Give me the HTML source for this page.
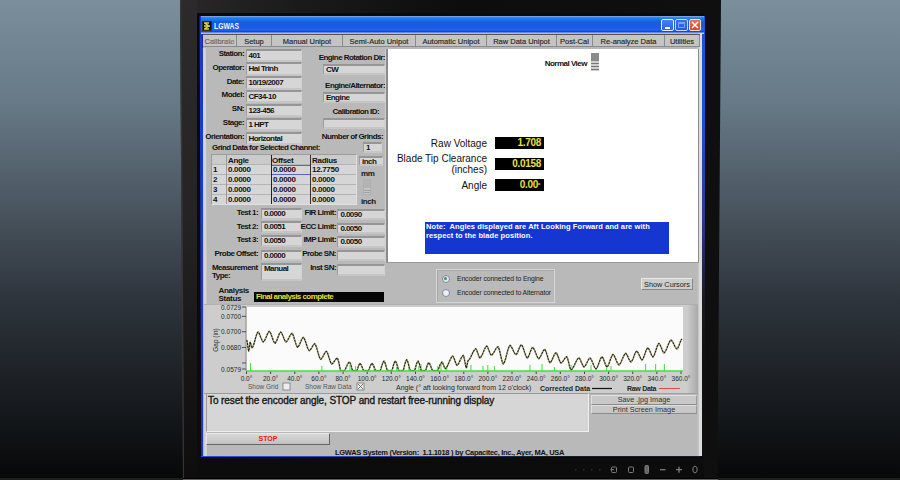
<!DOCTYPE html>
<html><head><meta charset="utf-8">
<style>
*{margin:0;padding:0;box-sizing:border-box}
html,body{width:900px;height:480px;overflow:hidden;background:#000}
body{position:relative;font-family:"Liberation Sans",sans-serif;}
.a{position:absolute}
#bgl{left:0;top:0;width:900px;height:480px;background:linear-gradient(#7a8e9c 0%,#687a88 20.8%,#4c5862 41.7%,#2e343c 62.5%,#181c20 83.3%,#070808 99.5%,#1e1e1e 99.6%)}
#bez{left:0;top:0;width:900px;height:480px;background:linear-gradient(90deg,#2a2828 180px,#1a1a1a 300px,#0d0d0d 460px,#0f0f0f 721px);clip-path:polygon(180px 0,721px 0,717.5px 480px,183px 480px)}
#bezs{left:197px;top:13px;width:507px;height:467px;background:linear-gradient(#0a0a0a,#0c0b0b 60%,#0d0c0c)}
#bezl{left:0;top:0;width:900px;height:480px;background:linear-gradient(#2c2a2a,#262324 45%,#181616 75%,#0e0d0d);clip-path:polygon(181.5px 0,197px 0,197px 480px,184px 480px)}
#bezle{left:0;top:0;width:900px;height:480px;background:#3a3533;clip-path:polygon(180px 0,181.5px 0,184px 480px,183px 480px)}
#bezb{left:183px;top:477.5px;width:535px;height:2.5px;background:linear-gradient(#020202 0,#020202 0.8px,#655d57 1px)}
#win{left:0;top:0;width:900px;height:480px;background:#1a3ad8;clip-path:polygon(199.6px 16px,202.6px 16px,204.2px 457px,201.2px 457px)}
#winhl{left:0;top:0;width:900px;height:480px;background:#d4d4d4;clip-path:polygon(202.9px 48px,205.8px 48px,207px 456px,204.2px 456px)}
#winb{left:201px;top:456px;width:499px;height:1px;background:linear-gradient(90deg,#2050e0,#2a48b0 30%,#181c28 70%)}
#winr{left:702px;top:16px;width:2.5px;height:441px;background:linear-gradient(#2050d8,#2050d8 20%,#2a3a90 45%,#181820 65%,#101010 80%)}
#title{left:201px;top:16px;width:503px;height:18px;background:linear-gradient(#c0b0d0 0,#2a90f8 1px,#1a80f0 2.5px,#1a5ce0 6px,#1a58e0 10px,#2064f0 14px,#0c40d8 16px,#c8d0e8 17px)}
#panel{left:203px;top:33px;width:499px;height:423px;background:#b9b9b9;border-right:3px solid #dcdcdc;box-shadow:inset -1.5px 0 0 #c4c4c4}
.lbl{position:absolute;font-weight:bold;font-size:8px;letter-spacing:-0.55px;color:#111;text-align:right;white-space:nowrap}
.box{position:absolute;box-sizing:border-box;background:#d6d6d6;border-top:2px solid #969696;border-left:1px solid #9c9c9c;border-bottom:2px solid #c6c6c6;border-right:1px solid #d2d2d2;font-size:8px;font-weight:bold;letter-spacing:-0.55px;color:#111;padding-left:2px;white-space:nowrap}
.tb{font-size:8px;font-weight:bold;letter-spacing:-0.3px;color:#111;line-height:9px;white-space:nowrap}
.tab{position:absolute;top:35px;height:12px;background:#c4c4c4;border-right:1px solid #8a8a8a;border-bottom:1px solid #8a8a8a;font-size:7.5px;color:#262626;-webkit-text-stroke:0.15px #262626;text-align:center;line-height:13px;white-space:nowrap}
</style></head><body>
<div id="bgl" class="a"></div>
<div id="bez" class="a"></div>
<div id="bezs" class="a"></div>
<div id="bezl" class="a"></div>
<div id="bezle" class="a"></div>
<div id="bezb" class="a"></div>
<div id="win" class="a"></div>
<div id="winr" class="a"></div>
<div id="winb" class="a"></div>
<div id="title" class="a"></div>
<div id="panel" class="a"></div>
<div id="winhl" class="a"></div>

<!-- title -->
<svg class="a" style="left:202px;top:21px" width="10" height="10" viewBox="0 0 10 10"><rect x="0.5" y="0.5" width="9" height="9" fill="#111" stroke="#3a3010" stroke-width="1"/><path d="M2,2 L7,2 M2,5 L8,5 M2,8 L7,8 M3,2.5 L7,5 L3,7.5" stroke="#e0d050" stroke-width="1.4" fill="none"/></svg>
<div class="a" style="left:214px;top:20px;font-size:8.5px;font-weight:bold;color:#f4f4ff;line-height:13px;transform:scaleX(0.8);transform-origin:0 0">LGWAS</div>
<div class="a" style="left:661px;top:19px;width:13px;height:12px;background:linear-gradient(#4a80f8,#2a5ee8);border:1px solid #e8f0ff;border-radius:2px"><div class="a" style="left:3px;top:7px;width:5px;height:2px;background:#fff"></div></div>
<div class="a" style="left:675px;top:19px;width:13px;height:12px;background:linear-gradient(#3a70f0,#2058e0);border:1px solid #c8d8ff;border-radius:2px"><div class="a" style="left:2px;top:2px;width:7px;height:6px;border:1px solid #7aa0f0;border-top-width:2px"></div></div>
<div class="a" style="left:689px;top:19px;width:12px;height:12px;background:linear-gradient(#f07048,#d84a20);border:1px solid #f8e0d0;border-radius:2px"><svg class="a" style="left:1px;top:1px" width="8" height="8" viewBox="0 0 8 8"><path d="M1,1 L7,7 M7,1 L1,7" stroke="#fff" stroke-width="1.5"/></svg></div>
<!-- tabs -->
<div class="a" style="left:203px;top:34px;width:497px;height:13px;background:#b8b8b8;border-top:1px solid #555"></div>
<div class="tab" style="left:203px;width:34px;color:#888">Calibrate</div>
<div class="tab" style="left:237px;width:35px">Setup</div>
<div class="tab" style="left:272px;width:71px">Manual Unipot</div>
<div class="tab" style="left:343px;width:73px">Semi-Auto Unipot</div>
<div class="tab" style="left:416px;width:71px">Automatic Unipot</div>
<div class="tab" style="left:487px;width:70px">Raw Data Unipot</div>
<div class="tab" style="left:557px;width:36px">Post-Cal</div>
<div class="tab" style="left:593px;width:72px">Re-analyze Data</div>
<div class="tab" style="left:665px;width:35px">Utilities</div>

<!-- left fields -->
<div class="lbl" style="left:190px;width:54px;top:49px;line-height:9px">Station:</div>
<div class="lbl" style="left:190px;width:54px;top:62.5px;line-height:9px">Operator:</div>
<div class="lbl" style="left:190px;width:54px;top:76.5px;line-height:9px">Date:</div>
<div class="lbl" style="left:190px;width:54px;top:90px;line-height:9px">Model:</div>
<div class="lbl" style="left:190px;width:54px;top:104px;line-height:9px">SN:</div>
<div class="lbl" style="left:190px;width:54px;top:118px;line-height:9px">Stage:</div>
<div class="lbl" style="left:190px;width:54px;top:132px;line-height:9px">Orientation:</div>
<div class="lbl" style="left:300px;width:85px;top:53px;line-height:9px">Engine Rotation Dir:</div>
<div class="lbl" style="left:300px;width:85px;top:81px;line-height:9px">Engine/Alternator:</div>
<div class="lbl" style="left:300px;width:79px;top:107px;line-height:9px">Calibration ID:</div>
<div class="lbl" style="left:300px;width:83px;top:132px;line-height:9px">Number of Grinds:</div>
<div class="lbl" style="left:212px;top:143px;line-height:9px;text-align:left">Grind Data for Selected Channel:</div>

<!-- boxes -->
<div class="box" style="left:245.5px;top:48.5px;width:56.5px;height:13.5px;line-height:10px">401</div>
<div class="box" style="left:245.5px;top:62px;width:56.5px;height:13.5px;line-height:10px">Hai Trinh</div>
<div class="box" style="left:245.5px;top:76px;width:56.5px;height:13.5px;line-height:10px">10/19/2007</div>
<div class="box" style="left:245.5px;top:89.5px;width:56.5px;height:13.5px;line-height:10px">CF34-10</div>
<div class="box" style="left:245.5px;top:103.5px;width:56.5px;height:13.5px;line-height:10px">123-456</div>
<div class="box" style="left:245.5px;top:117.5px;width:56.5px;height:13.5px;line-height:10px">1 HPT</div>
<div class="box" style="left:245.5px;top:131.5px;width:56.5px;height:13px;line-height:10px">Horizontal</div>
<div class="box" style="left:323px;top:63.5px;width:61.5px;height:11.5px;line-height:8.5px">CW</div>
<div class="box" style="left:323px;top:91.5px;width:61.5px;height:11.5px;line-height:8.5px">Engine</div>
<div class="box" style="left:323px;top:117.5px;width:61.5px;height:11.5px;line-height:8.5px"></div>
<div class="box" style="left:363px;top:142px;width:19px;height:10.5px;line-height:7.5px">1</div>
<div class="box" style="left:359px;top:155.5px;width:24px;height:10.5px;line-height:7.5px">inch</div>
<div class="box" style="left:261px;top:208px;width:40.5px;height:11.5px;line-height:8.5px">0.0000</div>
<div class="box" style="left:261px;top:221.3px;width:40.5px;height:11.5px;line-height:8.5px">0.0051</div>
<div class="box" style="left:261px;top:235px;width:40.5px;height:11.5px;line-height:8.5px">0.0050</div>
<div class="box" style="left:261px;top:249.6px;width:40.5px;height:11.5px;line-height:8.5px">0.0000</div>
<div class="box" style="left:261px;top:263.4px;width:40.5px;height:17.2px;line-height:8px">Manual</div>
<div class="box" style="left:337.4px;top:208.9px;width:47.8px;height:11.5px;line-height:8.5px">0.0090</div>
<div class="box" style="left:337.4px;top:222.7px;width:47.8px;height:11.5px;line-height:8.5px">0.0050</div>
<div class="box" style="left:337.4px;top:236.3px;width:47.8px;height:11.5px;line-height:8.5px">0.0050</div>
<div class="box" style="left:337.4px;top:249.6px;width:47.8px;height:11.5px;line-height:8.5px"></div>
<div class="box" style="left:337.4px;top:264.1px;width:47.8px;height:11.5px;line-height:8.5px"></div>
<!-- white panel -->
<div class="a" style="left:386px;top:48.5px;width:313px;height:214.5px;background:#fff;border-left:2px solid #8a8a8a;border-bottom:1px solid #9a9a9a;border-right:1px solid #8c8c8c;box-shadow:-1px 0 0 #d0d0d0"></div>
<!-- table -->
<div class="a" style="left:211px;top:154px;width:146px;height:51px;background:#b4b4b4;border:1px solid #9c9c9c;border-right-color:#e0e0e0;border-bottom-color:#e0e0e0"></div>
<div class="a" style="left:212px;top:155px;width:144px;height:9px;background:#cbcbcb"></div>
<div class="a tb" style="left:228px;top:155.5px;">Angle</div>
<div class="a tb" style="left:272px;top:155.5px;">Offset</div>
<div class="a tb" style="left:312px;top:155.5px;">Radius</div>
<div class="a" style="left:212px;top:165px;width:144px;height:9px;background:#d6d6d6"></div>
<div class="a tb" style="left:213px;top:165px;">1</div><div class="a tb" style="left:228px;top:165px;">0.0000</div><div class="a tb" style="left:273px;top:165px;">0.0000</div><div class="a tb" style="left:312px;top:165px;">12.7750</div>
<div class="a" style="left:212px;top:175px;width:144px;height:9px;background:#d6d6d6"></div>
<div class="a tb" style="left:213px;top:175px;">2</div><div class="a tb" style="left:228px;top:175px;">0.0000</div><div class="a tb" style="left:273px;top:175px;">0.0000</div><div class="a tb" style="left:312px;top:175px;">0.0000</div>
<div class="a" style="left:212px;top:184.5px;width:144px;height:9px;background:#d6d6d6"></div>
<div class="a tb" style="left:213px;top:184.5px;">3</div><div class="a tb" style="left:228px;top:184.5px;">0.0000</div><div class="a tb" style="left:273px;top:184.5px;">0.0000</div><div class="a tb" style="left:312px;top:184.5px;">0.0000</div>
<div class="a" style="left:212px;top:194.5px;width:144px;height:9px;background:#d6d6d6"></div>
<div class="a tb" style="left:213px;top:194.5px;">4</div><div class="a tb" style="left:228px;top:194.5px;">0.0000</div><div class="a tb" style="left:273px;top:194.5px;">0.0000</div><div class="a tb" style="left:312px;top:194.5px;">0.0000</div>
<div class="a" style="left:271px;top:164.5px;width:40px;height:10.5px;border:1px solid #5a64c8"></div>
<div class="a" style="left:226px;top:155px;width:1px;height:49px;background:#9a9a9a"></div>
<div class="a" style="left:271px;top:155px;width:1px;height:49px;background:#222"></div>
<div class="a" style="left:310px;top:155px;width:1px;height:49px;background:#333"></div>
<div class="a" style="left:361px;top:169.5px;font-size:8px;font-weight:bold;letter-spacing:-0.4px;color:#151515;line-height:8px">mm</div>
<div class="a" style="left:363px;top:178.5px;width:8px;height:16px;background:#c4c4c4;border:1px solid #b0b0b0"><div class="a" style="left:0px;top:0px;width:6px;height:8px;background:#b4b4b4"></div><div class="a" style="left:0px;top:10px;width:6px;height:3px;border-top:1px solid #a0a0a0;border-bottom:1px solid #a0a0a0"></div></div>
<div class="a" style="left:361px;top:197px;font-size:8px;font-weight:bold;letter-spacing:-0.4px;color:#151515;line-height:9px">inch</div>
<div class="lbl" style="left:200px;width:58px;top:208px;line-height:9px">Test 1:</div>
<div class="lbl" style="left:200px;width:58px;top:221.5px;line-height:9px">Test 2:</div>
<div class="lbl" style="left:200px;width:58px;top:235px;line-height:9px">Test 3:</div>
<div class="lbl" style="left:200px;width:58px;top:249px;line-height:9px">Probe Offset:</div>
<div class="lbl" style="left:212px;top:264px;line-height:8px;text-align:left">Measurement<br>Type:</div>
<div class="lbl" style="left:290px;width:46px;top:208px;line-height:9px">FIR Limit:</div>
<div class="lbl" style="left:290px;width:46px;top:221.5px;line-height:9px">ECC Limit:</div>
<div class="lbl" style="left:290px;width:46px;top:235px;line-height:9px">IMP Limit:</div>
<div class="lbl" style="left:290px;width:46px;top:249px;line-height:9px">Probe SN:</div>
<div class="lbl" style="left:290px;width:46px;top:263px;line-height:9px">Inst SN:</div>
<div class="lbl" style="left:218.5px;top:287px;line-height:8px;text-align:left;letter-spacing:-0.3px">Analysis<br>Status</div>
<div class="a" style="left:254px;top:292px;width:130px;height:10px;background:#050505;color:#e8e020;font-size:8px;letter-spacing:-0.55px;font-weight:bold;line-height:10px;padding-left:2px">Final analysis complete</div>

<!-- right panel content -->
<div class="a" style="left:517px;top:58.5px;width:70px;font-size:8px;letter-spacing:-0.5px;font-weight:bold;color:#111;text-align:right;line-height:9px">Normal View</div>
<div class="a" style="left:591px;top:53px;width:8px;height:18px;background:#cfcfcf"><div class="a" style="left:0;top:0;width:8px;height:8px;background:#8a8a8a"></div><div class="a" style="left:0;top:10px;width:8px;height:1px;background:#777"></div><div class="a" style="left:0;top:13px;width:8px;height:1px;background:#777"></div><div class="a" style="left:0;top:16px;width:8px;height:1px;background:#777"></div></div>
<div class="a" style="left:390px;top:138px;width:97px;font-size:10px;color:#111;text-align:right;line-height:12px">Raw Voltage</div>
<div class="a" style="left:390px;top:153px;width:97px;font-size:10px;color:#111;text-align:right;line-height:11px">Blade Tip Clearance<br>(inches)</div>
<div class="a" style="left:390px;top:180px;width:97px;font-size:10px;color:#111;text-align:right;line-height:12px">Angle</div>
<div class="a" style="left:495px;top:137px;width:49px;height:12px;background:#000;color:#e6e040;font-size:10px;font-weight:bold;letter-spacing:-0.3px;text-align:right;line-height:12px;padding-right:3px">1.708</div>
<div class="a" style="left:495px;top:158px;width:49px;height:12px;background:#000;color:#e6e040;font-size:10px;font-weight:bold;letter-spacing:-0.3px;text-align:right;line-height:12px;padding-right:3px">0.0158</div>
<div class="a" style="left:495px;top:179px;width:49px;height:12px;background:#000;color:#e6e040;font-size:10px;font-weight:bold;letter-spacing:-0.3px;text-align:right;line-height:12px;padding-right:6px">0.00<span style="position:absolute;left:42px;top:2px;font-size:6px;line-height:6px">=</span></div>
<div class="a" style="left:425px;top:222px;width:244px;height:32px;background:#1636d2;color:#fff;font-size:7.5px;font-weight:bold;letter-spacing:0.08px;line-height:8.5px;padding:1px 0 0 1px">Note:&nbsp; Angles displayed are Aft Looking Forward and are with<br>respect to the blade position.</div>
<!-- radio group -->
<div class="a" style="left:436px;top:269px;width:119px;height:34px;border:1px solid #d6d6d6;box-shadow:inset 1px 1px 0 #a8a8a8;background:#bababa"></div>
<div class="a" style="left:442px;top:275px;width:8px;height:8px;border-radius:50%;background:#e8e8f0;border:1.5px solid #7a88a8"><div class="a" style="left:1px;top:1px;width:3px;height:3px;border-radius:50%;background:#30a030"></div></div>
<div class="a" style="left:442px;top:289px;width:8px;height:8px;border-radius:50%;background:#eef0f4;border:1.5px solid #7a88a8"></div>
<div class="a" style="left:457px;top:275px;font-size:6.8px;letter-spacing:-0.1px;color:#222;line-height:8px;white-space:nowrap">Encoder connected to Engine</div>
<div class="a" style="left:457px;top:289px;font-size:6.8px;letter-spacing:-0.1px;color:#222;line-height:8px;white-space:nowrap">Encoder connected to Alternator</div>
<div class="a" style="left:641px;top:277.5px;width:52px;height:12px;background:#cdcdcd;border:1px solid #e8e8e8;border-right-color:#888;border-bottom-color:#888;font-size:7.3px;color:#222;text-align:center;line-height:11px;white-space:nowrap">Show Cursors</div>
<!-- graph panel -->
<!--GRAPH--><svg class="a" style="left:0;top:0" width="900" height="480" viewBox="0 0 900 480">
<defs><linearGradient id="gr" x1="0" x2="1" y1="0" y2="0"><stop offset="0" stop-color="#cfcfcf"/><stop offset="1" stop-color="#a9a9a9"/></linearGradient></defs>
<rect x="204" y="304" width="494" height="89.5" fill="#cdcdcd"/>
<rect x="686" y="304" width="12" height="89.5" fill="url(#gr)"/>
<rect x="204" y="304" width="494" height="1" fill="#b0b0b0"/>
<rect x="204" y="393" width="494" height="1" fill="#a0a0a0"/>
<rect x="246.5" y="307" width="436.5" height="64" fill="#fbfbfb"/>
<line x1="246" y1="307" x2="246" y2="371" stroke="#8a8a8a" stroke-width="1"/>
<g font-family="Liberation Sans" font-size="6.5" fill="#282828"><line x1="242" y1="363" x2="246" y2="363" stroke="#333" stroke-width="0.8"/><text x="241" y="309.5" text-anchor="end">0.0729</text><line x1="242" y1="307" x2="246" y2="307" stroke="#333" stroke-width="0.8"/><text x="241" y="318.9" text-anchor="end">0.0700</text><line x1="242" y1="316.4" x2="246" y2="316.4" stroke="#333" stroke-width="0.8"/><text x="241" y="334.2" text-anchor="end">0.0700</text><line x1="242" y1="331.7" x2="246" y2="331.7" stroke="#333" stroke-width="0.8"/><text x="241" y="350.0" text-anchor="end">0.0680</text><line x1="242" y1="347.5" x2="246" y2="347.5" stroke="#333" stroke-width="0.8"/><text x="241" y="371.5" text-anchor="end">0.0579</text><line x1="242" y1="369" x2="246" y2="369" stroke="#333" stroke-width="0.8"/><line x1="246.5" y1="371" x2="246.5" y2="374" stroke="#222" stroke-width="0.8"/><text x="246.5" y="381" text-anchor="middle">0.0°</text><line x1="270.6" y1="371" x2="270.6" y2="374" stroke="#222" stroke-width="0.8"/><text x="270.6" y="381" text-anchor="middle">20.0°</text><line x1="294.8" y1="371" x2="294.8" y2="374" stroke="#222" stroke-width="0.8"/><text x="294.8" y="381" text-anchor="middle">40.0°</text><line x1="318.9" y1="371" x2="318.9" y2="374" stroke="#222" stroke-width="0.8"/><text x="318.9" y="381" text-anchor="middle">60.0°</text><line x1="343.1" y1="371" x2="343.1" y2="374" stroke="#222" stroke-width="0.8"/><text x="343.1" y="381" text-anchor="middle">80.0°</text><line x1="367.2" y1="371" x2="367.2" y2="374" stroke="#222" stroke-width="0.8"/><text x="367.2" y="381" text-anchor="middle">100.0°</text><line x1="391.3" y1="371" x2="391.3" y2="374" stroke="#222" stroke-width="0.8"/><text x="391.3" y="381" text-anchor="middle">120.0°</text><line x1="415.5" y1="371" x2="415.5" y2="374" stroke="#222" stroke-width="0.8"/><text x="415.5" y="381" text-anchor="middle">140.0°</text><line x1="439.6" y1="371" x2="439.6" y2="374" stroke="#222" stroke-width="0.8"/><text x="439.6" y="381" text-anchor="middle">160.0°</text><line x1="463.8" y1="371" x2="463.8" y2="374" stroke="#222" stroke-width="0.8"/><text x="463.8" y="381" text-anchor="middle">180.0°</text><line x1="487.9" y1="371" x2="487.9" y2="374" stroke="#222" stroke-width="0.8"/><text x="487.9" y="381" text-anchor="middle">200.0°</text><line x1="512.0" y1="371" x2="512.0" y2="374" stroke="#222" stroke-width="0.8"/><text x="512.0" y="381" text-anchor="middle">220.0°</text><line x1="536.2" y1="371" x2="536.2" y2="374" stroke="#222" stroke-width="0.8"/><text x="536.2" y="381" text-anchor="middle">240.0°</text><line x1="560.3" y1="371" x2="560.3" y2="374" stroke="#222" stroke-width="0.8"/><text x="560.3" y="381" text-anchor="middle">260.0°</text><line x1="584.5" y1="371" x2="584.5" y2="374" stroke="#222" stroke-width="0.8"/><text x="584.5" y="381" text-anchor="middle">280.0°</text><line x1="608.6" y1="371" x2="608.6" y2="374" stroke="#222" stroke-width="0.8"/><text x="608.6" y="381" text-anchor="middle">300.0°</text><line x1="632.7" y1="371" x2="632.7" y2="374" stroke="#222" stroke-width="0.8"/><text x="632.7" y="381" text-anchor="middle">320.0°</text><line x1="656.9" y1="371" x2="656.9" y2="374" stroke="#222" stroke-width="0.8"/><text x="656.9" y="381" text-anchor="middle">340.0°</text><line x1="681.0" y1="371" x2="681.0" y2="374" stroke="#222" stroke-width="0.8"/><text x="681.0" y="381" text-anchor="middle">360.0°</text>
<text transform="translate(218,340) rotate(-90)" text-anchor="middle">Gap (in)</text>
<text x="248" y="389" fill="#555">Show Grid</text>
<text x="305" y="389" fill="#555">Show Raw Data</text>
<text x="396" y="389.5" font-size="7">Angle (° aft looking forward from 12 o'clock)</text>
</g>
<rect x="283" y="383" width="7" height="7" fill="#eee" stroke="#777" stroke-width="0.8"/>
<rect x="357" y="383" width="7" height="7" fill="#eee" stroke="#777" stroke-width="0.8"/>
<path d="M358,384 L363,389 M363,384 L358,389" stroke="#555" stroke-width="0.8"/>
<g font-family="Liberation Sans" font-size="7" font-weight="bold" fill="#222" letter-spacing="-0.3"><text x="540" y="391" letter-spacing="0">Corrected Data</text><text x="627" y="391">Raw Data</text></g>
<line x1="592" y1="388.5" x2="612" y2="388.5" stroke="#111" stroke-width="1.2"/>
<line x1="659" y1="388.5" x2="680" y2="388.5" stroke="#e04848" stroke-width="1"/>
<line x1="250.5" y1="363" x2="250.5" y2="371" stroke="#4ee04e" stroke-width="1.1"/><line x1="321.8" y1="366" x2="321.8" y2="371" stroke="#4ee04e" stroke-width="1.1"/><line x1="350" y1="365" x2="350" y2="371" stroke="#4ee04e" stroke-width="1.1"/><line x1="355.6" y1="366" x2="355.6" y2="371" stroke="#4ee04e" stroke-width="1.1"/><line x1="374.4" y1="366" x2="374.4" y2="371" stroke="#4ee04e" stroke-width="1.1"/><line x1="396.7" y1="367" x2="396.7" y2="371" stroke="#4ee04e" stroke-width="1.1"/><line x1="408.9" y1="365" x2="408.9" y2="371" stroke="#4ee04e" stroke-width="1.1"/><line x1="418.9" y1="366" x2="418.9" y2="371" stroke="#4ee04e" stroke-width="1.1"/><line x1="421" y1="364" x2="421" y2="371" stroke="#4ee04e" stroke-width="1.1"/><line x1="437.8" y1="366" x2="437.8" y2="371" stroke="#4ee04e" stroke-width="1.1"/><line x1="441" y1="364" x2="441" y2="371" stroke="#4ee04e" stroke-width="1.1"/><line x1="446.7" y1="366" x2="446.7" y2="371" stroke="#4ee04e" stroke-width="1.1"/><line x1="471" y1="365" x2="471" y2="371" stroke="#4ee04e" stroke-width="1.1"/><line x1="483" y1="366" x2="483" y2="371" stroke="#4ee04e" stroke-width="1.1"/><line x1="487.8" y1="365" x2="487.8" y2="371" stroke="#4ee04e" stroke-width="1.1"/><line x1="494.4" y1="366" x2="494.4" y2="371" stroke="#4ee04e" stroke-width="1.1"/><line x1="530" y1="365" x2="530" y2="371" stroke="#4ee04e" stroke-width="1.1"/><line x1="542" y1="364" x2="542" y2="371" stroke="#4ee04e" stroke-width="1.1"/><line x1="554.4" y1="367" x2="554.4" y2="371" stroke="#4ee04e" stroke-width="1.1"/><line x1="571" y1="365" x2="571" y2="371" stroke="#4ee04e" stroke-width="1.1"/><line x1="591" y1="365" x2="591" y2="371" stroke="#4ee04e" stroke-width="1.1"/><line x1="606.7" y1="365" x2="606.7" y2="371" stroke="#4ee04e" stroke-width="1.1"/><line x1="611" y1="366" x2="611" y2="371" stroke="#4ee04e" stroke-width="1.1"/><line x1="645.6" y1="364" x2="645.6" y2="371" stroke="#4ee04e" stroke-width="1.1"/><line x1="655.6" y1="364" x2="655.6" y2="371" stroke="#4ee04e" stroke-width="1.1"/><line x1="664.4" y1="364" x2="664.4" y2="371" stroke="#4ee04e" stroke-width="1.1"/>
<path d="M246.7,340.0 L247.2,342.0 L247.7,345.5 L248.2,349.0 L248.7,351.0 L249.2,348.5 L249.7,344.5 L250.2,342.0 L250.8,343.7 L251.4,346.3 L252.0,348.0 L252.5,347.4 L253.0,346.4 L253.5,345.1 L254.0,343.5 L254.5,341.8 L255.0,340.0 L255.5,338.2 L256.0,336.5 L256.5,334.9 L257.0,333.6 L257.5,332.6 L258.0,332.0 L258.5,332.5 L259.1,333.3 L259.6,334.4 L260.1,335.6 L260.6,337.0 L261.2,338.4 L261.7,339.6 L262.2,340.7 L262.8,341.5 L263.3,342.0 L263.8,341.6 L264.3,340.9 L264.8,340.0 L265.3,339.0 L265.8,337.9 L266.3,336.7 L266.8,335.4 L267.3,334.3 L267.8,333.3 L268.3,332.4 L268.8,331.7 L269.3,331.3 L269.8,331.8 L270.3,332.7 L270.9,333.8 L271.4,335.1 L271.9,336.6 L272.4,338.0 L272.9,339.5 L273.4,340.8 L274.0,341.9 L274.5,342.8 L275.0,343.3 L275.5,342.8 L276.0,342.0 L276.6,341.0 L277.1,339.7 L277.6,338.4 L278.1,336.9 L278.6,335.6 L279.1,334.3 L279.7,333.3 L280.2,332.5 L280.7,332.0 L281.2,332.5 L281.8,333.3 L282.3,334.4 L282.8,335.6 L283.4,337.0 L283.9,338.4 L284.4,339.6 L284.9,340.7 L285.5,341.5 L286.0,342.0 L286.5,341.6 L287.0,341.1 L287.5,340.4 L288.0,339.6 L288.5,338.6 L289.0,337.7 L289.5,336.7 L290.0,335.7 L290.5,334.9 L291.0,334.2 L291.5,333.7 L292.0,333.3 L292.5,333.9 L293.0,334.9 L293.5,336.2 L294.0,337.7 L294.5,339.4 L295.1,341.2 L295.6,342.9 L296.1,344.4 L296.6,345.7 L297.1,346.7 L297.6,347.3 L298.1,346.9 L298.6,346.1 L299.2,345.2 L299.7,344.1 L300.2,342.9 L300.7,341.7 L301.2,340.5 L301.7,339.4 L302.3,338.5 L302.8,337.7 L303.3,337.3 L303.8,337.8 L304.3,338.7 L304.8,339.7 L305.3,341.0 L305.8,342.5 L306.3,344.0 L306.8,345.5 L307.3,347.0 L307.8,348.3 L308.3,349.3 L308.8,350.2 L309.3,350.7 L309.8,350.3 L310.4,349.8 L310.9,349.0 L311.5,348.1 L312.0,347.2 L312.5,346.3 L313.1,345.4 L313.6,344.6 L314.2,344.1 L314.7,343.7 L315.2,344.3 L315.7,345.3 L316.2,346.5 L316.7,348.1 L317.2,349.7 L317.7,351.5 L318.2,353.3 L318.7,354.9 L319.2,356.5 L319.7,357.7 L320.2,358.7 L320.7,359.3 L321.2,358.9 L321.7,358.4 L322.3,357.6 L322.8,356.8 L323.3,355.8 L323.8,354.8 L324.3,353.8 L324.8,353.0 L325.4,352.2 L325.9,351.7 L326.4,351.3 L326.9,351.9 L327.5,353.0 L328.0,354.3 L328.5,355.9 L329.0,357.6 L329.6,359.4 L330.1,361.0 L330.6,362.3 L331.2,363.4 L331.7,364.0 L332.2,363.7 L332.7,363.3 L333.2,362.8 L333.7,362.1 L334.2,361.4 L334.8,360.6 L335.3,359.9 L335.8,359.2 L336.3,358.7 L336.8,358.3 L337.3,358.0 L337.8,359.0 L338.3,360.6 L338.9,362.7 L339.4,365.2 L339.9,367.8 L340.4,370.3 L341.0,370.5 L341.5,370.5 L342.0,370.5 L342.5,370.5 L343.1,370.5 L343.6,370.5 L344.1,370.5 L344.6,370.5 L345.2,369.8 L345.7,368.5 L346.2,367.2 L346.8,366.0 L347.3,364.9 L347.8,363.9 L348.3,363.1 L348.9,362.4 L349.4,362.0 L349.9,362.7 L350.5,363.8 L351.0,365.3 L351.5,367.1 L352.0,369.0 L352.6,370.5 L353.1,370.5 L353.6,370.5 L354.2,370.5 L354.7,370.5 L355.2,370.5 L355.8,370.5 L356.3,370.5 L356.8,370.5 L357.4,369.7 L357.9,367.9 L358.4,366.3 L358.9,365.0 L359.5,363.9 L360.0,363.3 L360.5,363.8 L361.0,364.6 L361.5,365.6 L362.0,366.8 L362.5,368.2 L363.0,369.6 L363.5,370.5 L364.0,370.5 L364.5,370.5 L365.0,370.5 L365.5,370.5 L366.0,370.5 L366.5,370.5 L367.0,370.5 L367.5,370.5 L368.0,370.5 L368.5,370.5 L369.0,369.7 L369.5,368.2 L370.0,366.8 L370.5,365.6 L371.0,364.6 L371.5,363.8 L372.0,363.3 L372.5,363.8 L373.0,364.6 L373.5,365.6 L374.0,366.8 L374.5,368.2 L375.0,369.6 L375.5,370.5 L376.0,370.5 L376.5,370.5 L377.0,370.5 L377.5,370.5 L378.0,370.5 L378.5,370.5 L379.0,370.5 L379.5,370.5 L380.0,370.5 L380.5,370.2 L381.0,368.5 L381.5,366.8 L382.0,365.2 L382.5,363.7 L383.0,362.5 L383.5,361.6 L384.0,361.0 L384.5,361.7 L385.0,362.8 L385.5,364.3 L386.0,366.1 L386.5,368.0 L387.1,370.0 L387.6,370.5 L388.1,370.5 L388.6,370.5 L389.1,370.5 L389.6,370.5 L390.1,370.5 L390.6,370.5 L391.2,370.5 L391.7,370.5 L392.2,370.0 L392.7,368.0 L393.2,366.1 L393.7,364.3 L394.3,362.8 L394.8,361.7 L395.3,361.0 L395.8,361.7 L396.3,362.8 L396.9,364.3 L397.4,366.1 L397.9,368.0 L398.4,370.0 L398.9,370.5 L399.4,370.5 L400.0,370.5 L400.5,370.5 L401.0,370.5 L401.5,370.5 L402.0,370.5 L402.6,370.5 L403.1,370.5 L403.6,369.4 L404.1,367.2 L404.6,365.1 L405.1,363.2 L405.7,361.6 L406.2,360.4 L406.7,359.6 L407.2,360.4 L407.7,361.6 L408.2,363.2 L408.7,365.1 L409.2,367.2 L409.8,369.4 L410.3,370.5 L410.8,370.5 L411.3,370.5 L411.8,370.5 L412.3,370.5 L412.8,370.5 L413.3,370.5 L413.9,370.5 L414.4,370.5 L414.9,370.0 L415.4,368.0 L415.9,366.1 L416.4,364.3 L417.0,362.8 L417.5,361.7 L418.0,361.0 L418.5,361.8 L419.1,363.0 L419.6,364.6 L420.1,366.5 L420.6,368.5 L421.2,370.5 L421.7,370.5 L422.2,370.5 L422.8,370.5 L423.3,370.5 L423.8,370.5 L424.4,370.5 L424.9,370.5 L425.5,370.5 L426.0,369.4 L426.5,367.5 L427.1,365.9 L427.6,364.5 L428.2,363.4 L428.7,362.7 L429.2,363.2 L429.8,364.1 L430.3,365.1 L430.8,366.4 L431.3,367.8 L431.9,369.3 L432.4,370.5 L432.9,370.5 L433.4,370.5 L433.9,370.5 L434.5,370.5 L435.0,370.5 L435.5,370.5 L436.0,370.5 L436.5,370.5 L437.0,370.5 L437.5,370.5 L438.0,370.4 L438.5,369.0 L439.0,367.6 L439.5,366.3 L440.0,365.1 L440.5,364.0 L441.0,363.2 L441.5,362.5 L442.0,362.0 L442.6,362.7 L443.1,363.9 L443.6,365.3 L444.2,366.8 L444.8,368.0 L445.3,368.7 L445.8,368.3 L446.4,367.7 L446.9,366.8 L447.4,365.9 L447.9,364.8 L448.5,363.6 L449.0,362.4 L449.5,361.1 L450.1,359.9 L450.6,358.8 L451.1,357.9 L451.6,357.0 L452.2,356.4 L452.7,356.0 L453.2,356.6 L453.8,357.7 L454.3,359.1 L454.9,360.6 L455.4,362.2 L455.9,363.6 L456.5,364.7 L457.0,365.3 L457.5,364.9 L458.1,364.3 L458.6,363.5 L459.1,362.5 L459.6,361.4 L460.1,360.3 L460.7,359.2 L461.2,358.1 L461.7,357.1 L462.2,356.3 L462.8,355.7 L463.3,355.3 L463.8,356.6 L464.3,358.8 L464.9,361.6 L465.4,364.5 L465.9,366.7 L466.4,368.0 L466.9,366.0 L467.5,362.7 L468.0,360.7 L468.5,360.3 L469.0,359.8 L469.5,359.1 L470.1,358.3 L470.6,357.3 L471.1,356.3 L471.6,355.2 L472.1,354.2 L472.6,353.1 L473.1,352.1 L473.6,351.1 L474.2,350.3 L474.7,349.6 L475.2,349.1 L475.7,348.7 L476.2,349.3 L476.8,350.4 L477.3,351.8 L477.9,353.3 L478.4,354.9 L478.9,356.3 L479.5,357.4 L480.0,358.0 L480.5,357.6 L481.0,356.9 L481.5,356.0 L482.1,355.0 L482.6,353.9 L483.1,352.6 L483.6,351.4 L484.1,350.1 L484.6,349.0 L485.2,348.0 L485.7,347.1 L486.2,346.4 L486.7,346.0 L487.2,346.5 L487.7,347.4 L488.2,348.6 L488.7,349.9 L489.3,351.4 L489.8,352.7 L490.3,353.9 L490.8,354.8 L491.3,355.3 L491.8,355.0 L492.3,354.5 L492.8,353.9 L493.4,353.2 L493.9,352.3 L494.4,351.5 L494.9,350.5 L495.4,349.7 L495.9,348.8 L496.5,348.1 L497.0,347.5 L497.5,347.0 L498.0,346.7 L498.5,347.6 L499.1,349.0 L499.6,350.8 L500.1,353.0 L500.6,355.3 L501.2,357.7 L501.7,359.9 L502.2,361.7 L502.8,363.1 L503.3,364.0 L503.8,363.3 L504.3,362.3 L504.8,361.0 L505.4,359.4 L505.9,357.6 L506.4,355.6 L506.9,353.7 L507.4,351.7 L507.9,349.9 L508.5,348.3 L509.0,347.0 L509.5,346.0 L510.0,345.3 L510.5,345.7 L511.0,346.3 L511.5,347.0 L512.0,347.9 L512.5,348.9 L513.0,350.0 L513.5,351.1 L514.0,352.1 L514.5,353.0 L515.0,353.7 L515.5,354.3 L516.0,354.7 L516.5,354.2 L517.1,353.4 L517.6,352.3 L518.1,351.1 L518.6,349.7 L519.2,348.3 L519.7,347.1 L520.2,346.0 L520.8,345.2 L521.3,344.7 L521.8,345.2 L522.3,346.1 L522.8,347.1 L523.3,348.4 L523.8,349.8 L524.3,351.3 L524.8,352.9 L525.3,354.3 L525.8,355.6 L526.3,356.6 L526.8,357.5 L527.3,358.0 L527.8,357.5 L528.4,356.6 L528.9,355.4 L529.5,354.1 L530.0,352.7 L530.5,351.2 L531.1,349.9 L531.6,348.7 L532.2,347.8 L532.7,347.3 L533.2,347.8 L533.7,348.5 L534.2,349.4 L534.7,350.5 L535.2,351.7 L535.7,353.0 L536.2,354.3 L536.7,355.5 L537.2,356.6 L537.7,357.5 L538.2,358.2 L538.7,358.7 L539.2,358.3 L539.7,357.7 L540.2,357.0 L540.7,356.1 L541.2,355.1 L541.7,354.0 L542.2,352.9 L542.7,351.9 L543.2,351.0 L543.7,350.3 L544.2,349.7 L544.7,349.3 L545.2,350.0 L545.8,351.1 L546.3,352.5 L546.8,354.2 L547.4,356.0 L547.9,357.8 L548.4,359.5 L548.9,360.9 L549.5,362.0 L550.0,362.7 L550.5,362.3 L551.0,361.7 L551.5,360.9 L552.0,359.9 L552.5,358.8 L553.0,357.7 L553.5,356.6 L554.0,355.5 L554.5,354.5 L555.0,353.7 L555.5,353.1 L556.0,352.7 L556.5,353.2 L557.0,354.1 L557.5,355.2 L558.0,356.5 L558.5,357.8 L559.0,359.2 L559.5,360.5 L560.0,361.6 L560.5,362.5 L561.0,363.0 L561.5,362.7 L562.0,362.3 L562.6,361.7 L563.1,361.0 L563.6,360.2 L564.1,359.5 L564.6,358.7 L565.1,358.0 L565.7,357.4 L566.2,357.0 L566.7,356.7 L567.2,357.6 L567.8,359.1 L568.3,361.1 L568.9,363.3 L569.4,365.6 L569.9,367.6 L570.5,369.1 L571.0,370.0 L571.5,369.6 L572.1,369.1 L572.6,368.4 L573.1,367.5 L573.6,366.6 L574.2,365.6 L574.7,364.5 L575.2,363.3 L575.7,362.2 L576.3,361.2 L576.8,360.3 L577.3,359.4 L577.8,358.7 L578.4,358.2 L578.9,357.8 L579.4,358.3 L579.9,359.0 L580.4,360.0 L580.9,361.2 L581.5,362.4 L582.0,363.6 L582.5,364.8 L583.0,365.8 L583.5,366.5 L584.0,367.0 L584.5,366.6 L585.0,366.1 L585.5,365.4 L586.0,364.5 L586.5,363.5 L587.0,362.5 L587.5,361.5 L588.0,360.5 L588.5,359.6 L589.0,358.9 L589.5,358.4 L590.0,358.0 L590.5,358.4 L591.0,359.1 L591.5,360.0 L592.0,361.1 L592.5,362.3 L593.0,363.5 L593.5,364.7 L594.0,365.9 L594.5,367.0 L595.0,367.9 L595.5,368.6 L596.0,369.0 L596.5,368.5 L597.0,367.7 L597.5,366.8 L598.0,365.6 L598.5,364.2 L599.0,362.9 L599.5,361.5 L600.0,360.1 L600.5,358.9 L601.0,358.0 L601.5,357.2 L602.0,356.7 L602.5,357.2 L603.0,358.1 L603.5,359.2 L604.0,360.5 L604.5,361.8 L605.0,363.2 L605.5,364.5 L606.0,365.6 L606.5,366.5 L607.0,367.0 L607.5,366.5 L608.0,365.7 L608.5,364.7 L609.0,363.5 L609.5,362.1 L610.0,360.7 L610.5,359.3 L611.0,357.9 L611.5,356.7 L612.0,355.7 L612.5,354.9 L613.0,354.4 L613.5,354.8 L614.0,355.5 L614.5,356.3 L615.0,357.4 L615.5,358.5 L616.0,359.7 L616.5,360.9 L617.0,362.0 L617.5,363.1 L618.0,363.9 L618.5,364.6 L619.0,365.0 L619.5,364.6 L620.0,363.9 L620.5,363.1 L621.0,362.1 L621.5,361.0 L622.0,359.8 L622.6,358.5 L623.1,357.3 L623.6,356.2 L624.1,355.2 L624.6,354.4 L625.1,353.7 L625.6,353.3 L626.1,353.7 L626.7,354.4 L627.2,355.4 L627.8,356.5 L628.3,357.6 L628.8,358.8 L629.4,359.9 L629.9,360.9 L630.5,361.6 L631.0,362.0 L631.5,361.5 L632.0,360.7 L632.6,359.7 L633.1,358.5 L633.6,357.2 L634.1,355.8 L634.6,354.5 L635.1,353.3 L635.7,352.3 L636.2,351.5 L636.7,351.0 L637.2,351.5 L637.8,352.2 L638.3,353.2 L638.8,354.3 L639.4,355.5 L639.9,356.7 L640.4,357.8 L640.9,358.8 L641.5,359.5 L642.0,360.0 L642.5,359.5 L643.1,358.6 L643.6,357.5 L644.1,356.1 L644.6,354.7 L645.2,353.1 L645.7,351.7 L646.2,350.3 L646.7,349.2 L647.3,348.3 L647.8,347.8 L648.3,348.3 L648.8,349.0 L649.4,350.0 L649.9,351.2 L650.4,352.4 L650.9,353.6 L651.4,354.8 L652.0,355.8 L652.5,356.5 L653.0,357.0 L653.5,356.4 L654.1,355.4 L654.6,354.2 L655.1,352.7 L655.7,351.0 L656.2,349.3 L656.8,347.6 L657.3,346.1 L657.8,344.9 L658.4,343.9 L658.9,343.3 L659.4,343.8 L659.9,344.6 L660.4,345.6 L660.9,346.8 L661.5,348.1 L662.0,349.5 L662.5,350.7 L663.0,351.7 L663.5,352.5 L664.0,353.0 L664.5,352.6 L665.0,351.9 L665.5,351.1 L666.0,350.1 L666.5,349.0 L667.0,347.8 L667.5,346.5 L668.0,345.2 L668.5,344.0 L669.0,342.9 L669.5,341.9 L670.0,341.1 L670.5,340.4 L671.0,340.0 L671.5,340.4 L672.0,340.9 L672.5,341.6 L673.0,342.5 L673.5,343.5 L674.0,344.5 L674.5,345.5 L675.0,346.5 L675.5,347.4 L676.0,348.1 L676.5,348.6 L677.0,349.0 L677.5,348.5 L678.0,347.7 L678.5,346.6 L679.0,345.4 L679.5,344.0 L680.0,342.6 L680.5,341.4 L681.0,340.3 L681.5,339.5 L682.0,339.0" fill="none" stroke="#b8b488" stroke-width="1.6" stroke-linejoin="round"/><path d="M246.7,340.0 L247.2,342.0 L247.7,345.5 L248.2,349.0 L248.7,351.0 L249.2,348.5 L249.7,344.5 L250.2,342.0 L250.8,343.7 L251.4,346.3 L252.0,348.0 L252.5,347.4 L253.0,346.4 L253.5,345.1 L254.0,343.5 L254.5,341.8 L255.0,340.0 L255.5,338.2 L256.0,336.5 L256.5,334.9 L257.0,333.6 L257.5,332.6 L258.0,332.0 L258.5,332.5 L259.1,333.3 L259.6,334.4 L260.1,335.6 L260.6,337.0 L261.2,338.4 L261.7,339.6 L262.2,340.7 L262.8,341.5 L263.3,342.0 L263.8,341.6 L264.3,340.9 L264.8,340.0 L265.3,339.0 L265.8,337.9 L266.3,336.7 L266.8,335.4 L267.3,334.3 L267.8,333.3 L268.3,332.4 L268.8,331.7 L269.3,331.3 L269.8,331.8 L270.3,332.7 L270.9,333.8 L271.4,335.1 L271.9,336.6 L272.4,338.0 L272.9,339.5 L273.4,340.8 L274.0,341.9 L274.5,342.8 L275.0,343.3 L275.5,342.8 L276.0,342.0 L276.6,341.0 L277.1,339.7 L277.6,338.4 L278.1,336.9 L278.6,335.6 L279.1,334.3 L279.7,333.3 L280.2,332.5 L280.7,332.0 L281.2,332.5 L281.8,333.3 L282.3,334.4 L282.8,335.6 L283.4,337.0 L283.9,338.4 L284.4,339.6 L284.9,340.7 L285.5,341.5 L286.0,342.0 L286.5,341.6 L287.0,341.1 L287.5,340.4 L288.0,339.6 L288.5,338.6 L289.0,337.7 L289.5,336.7 L290.0,335.7 L290.5,334.9 L291.0,334.2 L291.5,333.7 L292.0,333.3 L292.5,333.9 L293.0,334.9 L293.5,336.2 L294.0,337.7 L294.5,339.4 L295.1,341.2 L295.6,342.9 L296.1,344.4 L296.6,345.7 L297.1,346.7 L297.6,347.3 L298.1,346.9 L298.6,346.1 L299.2,345.2 L299.7,344.1 L300.2,342.9 L300.7,341.7 L301.2,340.5 L301.7,339.4 L302.3,338.5 L302.8,337.7 L303.3,337.3 L303.8,337.8 L304.3,338.7 L304.8,339.7 L305.3,341.0 L305.8,342.5 L306.3,344.0 L306.8,345.5 L307.3,347.0 L307.8,348.3 L308.3,349.3 L308.8,350.2 L309.3,350.7 L309.8,350.3 L310.4,349.8 L310.9,349.0 L311.5,348.1 L312.0,347.2 L312.5,346.3 L313.1,345.4 L313.6,344.6 L314.2,344.1 L314.7,343.7 L315.2,344.3 L315.7,345.3 L316.2,346.5 L316.7,348.1 L317.2,349.7 L317.7,351.5 L318.2,353.3 L318.7,354.9 L319.2,356.5 L319.7,357.7 L320.2,358.7 L320.7,359.3 L321.2,358.9 L321.7,358.4 L322.3,357.6 L322.8,356.8 L323.3,355.8 L323.8,354.8 L324.3,353.8 L324.8,353.0 L325.4,352.2 L325.9,351.7 L326.4,351.3 L326.9,351.9 L327.5,353.0 L328.0,354.3 L328.5,355.9 L329.0,357.6 L329.6,359.4 L330.1,361.0 L330.6,362.3 L331.2,363.4 L331.7,364.0 L332.2,363.7 L332.7,363.3 L333.2,362.8 L333.7,362.1 L334.2,361.4 L334.8,360.6 L335.3,359.9 L335.8,359.2 L336.3,358.7 L336.8,358.3 L337.3,358.0 L337.8,359.0 L338.3,360.6 L338.9,362.7 L339.4,365.2 L339.9,367.8 L340.4,370.3 L341.0,370.5 L341.5,370.5 L342.0,370.5 L342.5,370.5 L343.1,370.5 L343.6,370.5 L344.1,370.5 L344.6,370.5 L345.2,369.8 L345.7,368.5 L346.2,367.2 L346.8,366.0 L347.3,364.9 L347.8,363.9 L348.3,363.1 L348.9,362.4 L349.4,362.0 L349.9,362.7 L350.5,363.8 L351.0,365.3 L351.5,367.1 L352.0,369.0 L352.6,370.5 L353.1,370.5 L353.6,370.5 L354.2,370.5 L354.7,370.5 L355.2,370.5 L355.8,370.5 L356.3,370.5 L356.8,370.5 L357.4,369.7 L357.9,367.9 L358.4,366.3 L358.9,365.0 L359.5,363.9 L360.0,363.3 L360.5,363.8 L361.0,364.6 L361.5,365.6 L362.0,366.8 L362.5,368.2 L363.0,369.6 L363.5,370.5 L364.0,370.5 L364.5,370.5 L365.0,370.5 L365.5,370.5 L366.0,370.5 L366.5,370.5 L367.0,370.5 L367.5,370.5 L368.0,370.5 L368.5,370.5 L369.0,369.7 L369.5,368.2 L370.0,366.8 L370.5,365.6 L371.0,364.6 L371.5,363.8 L372.0,363.3 L372.5,363.8 L373.0,364.6 L373.5,365.6 L374.0,366.8 L374.5,368.2 L375.0,369.6 L375.5,370.5 L376.0,370.5 L376.5,370.5 L377.0,370.5 L377.5,370.5 L378.0,370.5 L378.5,370.5 L379.0,370.5 L379.5,370.5 L380.0,370.5 L380.5,370.2 L381.0,368.5 L381.5,366.8 L382.0,365.2 L382.5,363.7 L383.0,362.5 L383.5,361.6 L384.0,361.0 L384.5,361.7 L385.0,362.8 L385.5,364.3 L386.0,366.1 L386.5,368.0 L387.1,370.0 L387.6,370.5 L388.1,370.5 L388.6,370.5 L389.1,370.5 L389.6,370.5 L390.1,370.5 L390.6,370.5 L391.2,370.5 L391.7,370.5 L392.2,370.0 L392.7,368.0 L393.2,366.1 L393.7,364.3 L394.3,362.8 L394.8,361.7 L395.3,361.0 L395.8,361.7 L396.3,362.8 L396.9,364.3 L397.4,366.1 L397.9,368.0 L398.4,370.0 L398.9,370.5 L399.4,370.5 L400.0,370.5 L400.5,370.5 L401.0,370.5 L401.5,370.5 L402.0,370.5 L402.6,370.5 L403.1,370.5 L403.6,369.4 L404.1,367.2 L404.6,365.1 L405.1,363.2 L405.7,361.6 L406.2,360.4 L406.7,359.6 L407.2,360.4 L407.7,361.6 L408.2,363.2 L408.7,365.1 L409.2,367.2 L409.8,369.4 L410.3,370.5 L410.8,370.5 L411.3,370.5 L411.8,370.5 L412.3,370.5 L412.8,370.5 L413.3,370.5 L413.9,370.5 L414.4,370.5 L414.9,370.0 L415.4,368.0 L415.9,366.1 L416.4,364.3 L417.0,362.8 L417.5,361.7 L418.0,361.0 L418.5,361.8 L419.1,363.0 L419.6,364.6 L420.1,366.5 L420.6,368.5 L421.2,370.5 L421.7,370.5 L422.2,370.5 L422.8,370.5 L423.3,370.5 L423.8,370.5 L424.4,370.5 L424.9,370.5 L425.5,370.5 L426.0,369.4 L426.5,367.5 L427.1,365.9 L427.6,364.5 L428.2,363.4 L428.7,362.7 L429.2,363.2 L429.8,364.1 L430.3,365.1 L430.8,366.4 L431.3,367.8 L431.9,369.3 L432.4,370.5 L432.9,370.5 L433.4,370.5 L433.9,370.5 L434.5,370.5 L435.0,370.5 L435.5,370.5 L436.0,370.5 L436.5,370.5 L437.0,370.5 L437.5,370.5 L438.0,370.4 L438.5,369.0 L439.0,367.6 L439.5,366.3 L440.0,365.1 L440.5,364.0 L441.0,363.2 L441.5,362.5 L442.0,362.0 L442.6,362.7 L443.1,363.9 L443.6,365.3 L444.2,366.8 L444.8,368.0 L445.3,368.7 L445.8,368.3 L446.4,367.7 L446.9,366.8 L447.4,365.9 L447.9,364.8 L448.5,363.6 L449.0,362.4 L449.5,361.1 L450.1,359.9 L450.6,358.8 L451.1,357.9 L451.6,357.0 L452.2,356.4 L452.7,356.0 L453.2,356.6 L453.8,357.7 L454.3,359.1 L454.9,360.6 L455.4,362.2 L455.9,363.6 L456.5,364.7 L457.0,365.3 L457.5,364.9 L458.1,364.3 L458.6,363.5 L459.1,362.5 L459.6,361.4 L460.1,360.3 L460.7,359.2 L461.2,358.1 L461.7,357.1 L462.2,356.3 L462.8,355.7 L463.3,355.3 L463.8,356.6 L464.3,358.8 L464.9,361.6 L465.4,364.5 L465.9,366.7 L466.4,368.0 L466.9,366.0 L467.5,362.7 L468.0,360.7 L468.5,360.3 L469.0,359.8 L469.5,359.1 L470.1,358.3 L470.6,357.3 L471.1,356.3 L471.6,355.2 L472.1,354.2 L472.6,353.1 L473.1,352.1 L473.6,351.1 L474.2,350.3 L474.7,349.6 L475.2,349.1 L475.7,348.7 L476.2,349.3 L476.8,350.4 L477.3,351.8 L477.9,353.3 L478.4,354.9 L478.9,356.3 L479.5,357.4 L480.0,358.0 L480.5,357.6 L481.0,356.9 L481.5,356.0 L482.1,355.0 L482.6,353.9 L483.1,352.6 L483.6,351.4 L484.1,350.1 L484.6,349.0 L485.2,348.0 L485.7,347.1 L486.2,346.4 L486.7,346.0 L487.2,346.5 L487.7,347.4 L488.2,348.6 L488.7,349.9 L489.3,351.4 L489.8,352.7 L490.3,353.9 L490.8,354.8 L491.3,355.3 L491.8,355.0 L492.3,354.5 L492.8,353.9 L493.4,353.2 L493.9,352.3 L494.4,351.5 L494.9,350.5 L495.4,349.7 L495.9,348.8 L496.5,348.1 L497.0,347.5 L497.5,347.0 L498.0,346.7 L498.5,347.6 L499.1,349.0 L499.6,350.8 L500.1,353.0 L500.6,355.3 L501.2,357.7 L501.7,359.9 L502.2,361.7 L502.8,363.1 L503.3,364.0 L503.8,363.3 L504.3,362.3 L504.8,361.0 L505.4,359.4 L505.9,357.6 L506.4,355.6 L506.9,353.7 L507.4,351.7 L507.9,349.9 L508.5,348.3 L509.0,347.0 L509.5,346.0 L510.0,345.3 L510.5,345.7 L511.0,346.3 L511.5,347.0 L512.0,347.9 L512.5,348.9 L513.0,350.0 L513.5,351.1 L514.0,352.1 L514.5,353.0 L515.0,353.7 L515.5,354.3 L516.0,354.7 L516.5,354.2 L517.1,353.4 L517.6,352.3 L518.1,351.1 L518.6,349.7 L519.2,348.3 L519.7,347.1 L520.2,346.0 L520.8,345.2 L521.3,344.7 L521.8,345.2 L522.3,346.1 L522.8,347.1 L523.3,348.4 L523.8,349.8 L524.3,351.3 L524.8,352.9 L525.3,354.3 L525.8,355.6 L526.3,356.6 L526.8,357.5 L527.3,358.0 L527.8,357.5 L528.4,356.6 L528.9,355.4 L529.5,354.1 L530.0,352.7 L530.5,351.2 L531.1,349.9 L531.6,348.7 L532.2,347.8 L532.7,347.3 L533.2,347.8 L533.7,348.5 L534.2,349.4 L534.7,350.5 L535.2,351.7 L535.7,353.0 L536.2,354.3 L536.7,355.5 L537.2,356.6 L537.7,357.5 L538.2,358.2 L538.7,358.7 L539.2,358.3 L539.7,357.7 L540.2,357.0 L540.7,356.1 L541.2,355.1 L541.7,354.0 L542.2,352.9 L542.7,351.9 L543.2,351.0 L543.7,350.3 L544.2,349.7 L544.7,349.3 L545.2,350.0 L545.8,351.1 L546.3,352.5 L546.8,354.2 L547.4,356.0 L547.9,357.8 L548.4,359.5 L548.9,360.9 L549.5,362.0 L550.0,362.7 L550.5,362.3 L551.0,361.7 L551.5,360.9 L552.0,359.9 L552.5,358.8 L553.0,357.7 L553.5,356.6 L554.0,355.5 L554.5,354.5 L555.0,353.7 L555.5,353.1 L556.0,352.7 L556.5,353.2 L557.0,354.1 L557.5,355.2 L558.0,356.5 L558.5,357.8 L559.0,359.2 L559.5,360.5 L560.0,361.6 L560.5,362.5 L561.0,363.0 L561.5,362.7 L562.0,362.3 L562.6,361.7 L563.1,361.0 L563.6,360.2 L564.1,359.5 L564.6,358.7 L565.1,358.0 L565.7,357.4 L566.2,357.0 L566.7,356.7 L567.2,357.6 L567.8,359.1 L568.3,361.1 L568.9,363.3 L569.4,365.6 L569.9,367.6 L570.5,369.1 L571.0,370.0 L571.5,369.6 L572.1,369.1 L572.6,368.4 L573.1,367.5 L573.6,366.6 L574.2,365.6 L574.7,364.5 L575.2,363.3 L575.7,362.2 L576.3,361.2 L576.8,360.3 L577.3,359.4 L577.8,358.7 L578.4,358.2 L578.9,357.8 L579.4,358.3 L579.9,359.0 L580.4,360.0 L580.9,361.2 L581.5,362.4 L582.0,363.6 L582.5,364.8 L583.0,365.8 L583.5,366.5 L584.0,367.0 L584.5,366.6 L585.0,366.1 L585.5,365.4 L586.0,364.5 L586.5,363.5 L587.0,362.5 L587.5,361.5 L588.0,360.5 L588.5,359.6 L589.0,358.9 L589.5,358.4 L590.0,358.0 L590.5,358.4 L591.0,359.1 L591.5,360.0 L592.0,361.1 L592.5,362.3 L593.0,363.5 L593.5,364.7 L594.0,365.9 L594.5,367.0 L595.0,367.9 L595.5,368.6 L596.0,369.0 L596.5,368.5 L597.0,367.7 L597.5,366.8 L598.0,365.6 L598.5,364.2 L599.0,362.9 L599.5,361.5 L600.0,360.1 L600.5,358.9 L601.0,358.0 L601.5,357.2 L602.0,356.7 L602.5,357.2 L603.0,358.1 L603.5,359.2 L604.0,360.5 L604.5,361.8 L605.0,363.2 L605.5,364.5 L606.0,365.6 L606.5,366.5 L607.0,367.0 L607.5,366.5 L608.0,365.7 L608.5,364.7 L609.0,363.5 L609.5,362.1 L610.0,360.7 L610.5,359.3 L611.0,357.9 L611.5,356.7 L612.0,355.7 L612.5,354.9 L613.0,354.4 L613.5,354.8 L614.0,355.5 L614.5,356.3 L615.0,357.4 L615.5,358.5 L616.0,359.7 L616.5,360.9 L617.0,362.0 L617.5,363.1 L618.0,363.9 L618.5,364.6 L619.0,365.0 L619.5,364.6 L620.0,363.9 L620.5,363.1 L621.0,362.1 L621.5,361.0 L622.0,359.8 L622.6,358.5 L623.1,357.3 L623.6,356.2 L624.1,355.2 L624.6,354.4 L625.1,353.7 L625.6,353.3 L626.1,353.7 L626.7,354.4 L627.2,355.4 L627.8,356.5 L628.3,357.6 L628.8,358.8 L629.4,359.9 L629.9,360.9 L630.5,361.6 L631.0,362.0 L631.5,361.5 L632.0,360.7 L632.6,359.7 L633.1,358.5 L633.6,357.2 L634.1,355.8 L634.6,354.5 L635.1,353.3 L635.7,352.3 L636.2,351.5 L636.7,351.0 L637.2,351.5 L637.8,352.2 L638.3,353.2 L638.8,354.3 L639.4,355.5 L639.9,356.7 L640.4,357.8 L640.9,358.8 L641.5,359.5 L642.0,360.0 L642.5,359.5 L643.1,358.6 L643.6,357.5 L644.1,356.1 L644.6,354.7 L645.2,353.1 L645.7,351.7 L646.2,350.3 L646.7,349.2 L647.3,348.3 L647.8,347.8 L648.3,348.3 L648.8,349.0 L649.4,350.0 L649.9,351.2 L650.4,352.4 L650.9,353.6 L651.4,354.8 L652.0,355.8 L652.5,356.5 L653.0,357.0 L653.5,356.4 L654.1,355.4 L654.6,354.2 L655.1,352.7 L655.7,351.0 L656.2,349.3 L656.8,347.6 L657.3,346.1 L657.8,344.9 L658.4,343.9 L658.9,343.3 L659.4,343.8 L659.9,344.6 L660.4,345.6 L660.9,346.8 L661.5,348.1 L662.0,349.5 L662.5,350.7 L663.0,351.7 L663.5,352.5 L664.0,353.0 L664.5,352.6 L665.0,351.9 L665.5,351.1 L666.0,350.1 L666.5,349.0 L667.0,347.8 L667.5,346.5 L668.0,345.2 L668.5,344.0 L669.0,342.9 L669.5,341.9 L670.0,341.1 L670.5,340.4 L671.0,340.0 L671.5,340.4 L672.0,340.9 L672.5,341.6 L673.0,342.5 L673.5,343.5 L674.0,344.5 L674.5,345.5 L675.0,346.5 L675.5,347.4 L676.0,348.1 L676.5,348.6 L677.0,349.0 L677.5,348.5 L678.0,347.7 L678.5,346.6 L679.0,345.4 L679.5,344.0 L680.0,342.6 L680.5,341.4 L681.0,340.3 L681.5,339.5 L682.0,339.0" fill="none" stroke="#262618" stroke-width="1.1" stroke-dasharray="2.2,0.8" stroke-linejoin="round"/>
<line x1="246.5" y1="371" x2="683" y2="371" stroke="#44dd44" stroke-width="1.6"/>
</svg><!--/GRAPH-->
<!-- text box -->
<div class="a" style="left:206px;top:393px;width:383px;height:39px;background:#d6d6d6;border:1px solid #9a9a9a;border-right-color:#eee;border-bottom-color:#eee;font-size:10px;font-weight:normal;-webkit-text-stroke:0.35px #161616;letter-spacing:-0.09px;color:#161616;padding:1px 0 0 1px;line-height:12px;white-space:nowrap">To reset the encoder angle, STOP and restart free-running display</div>
<div class="a" style="left:591px;top:395px;width:106px;height:9.5px;background:#c8c8c8;border:1px solid #e0e0e0;border-bottom-color:#8a8a8a;border-right-color:#9a9a9a;font-size:7.3px;color:#333;text-align:center;line-height:8px">Save .jpg Image</div>
<div class="a" style="left:591px;top:404.5px;width:106px;height:9.5px;background:#c8c8c8;border:1px solid #e0e0e0;border-bottom-color:#8a8a8a;border-right-color:#9a9a9a;font-size:7.3px;color:#333;text-align:center;line-height:8px">Print Screen Image</div>
<div class="a" style="left:206px;top:433px;width:124px;height:12px;background:linear-gradient(#d8d8d8,#c0c0c0);border:1px solid #e8e8e8;border-right-color:#666;border-bottom-color:#666;font-size:7px;font-weight:bold;color:#e02020;text-align:center;line-height:10px">STOP</div>
<div class="a" style="left:335px;top:448px;width:260px;font-size:7.5px;letter-spacing:-0.3px;font-weight:bold;color:#111;line-height:9px;white-space:nowrap">LGWAS System (Version:&nbsp; 1.1.1018 ) by Capacitec, Inc., Ayer, MA, USA</div>

<!-- bezel icons -->
<svg class="a" style="left:560px;top:458px" width="160" height="22" viewBox="0 0 160 22">
<g fill="none" stroke="#7c7c7c" stroke-width="1">
<rect x="51.5" y="9" width="5" height="5.5" rx="1"/><path d="M50.5,11.7 L54,11.7"/>
<rect x="68.5" y="9" width="5" height="5.5" rx="1"/>
<rect x="85" y="7.5" width="3.5" height="8" rx="1" fill="#666"/>
<path d="M100,11.7 L105.5,11.7" stroke-width="1.3"/>
<path d="M116,11.7 L122,11.7 M119,8.7 L119,14.7" stroke-width="1.3"/>
<path d="M133,9.5 L135,8 L137,9.5 L137,13.5 L135,15 L133,13.5 Z"/>
</g>
<g fill="#2a2a2a"><rect x="15" y="11" width="1.5" height="1.5"/><rect x="23" y="11" width="1.5" height="1.5"/><rect x="31" y="11" width="1.5" height="1.5"/><rect x="39" y="11" width="1.5" height="1.5"/></g>
</svg>
</body></html>
